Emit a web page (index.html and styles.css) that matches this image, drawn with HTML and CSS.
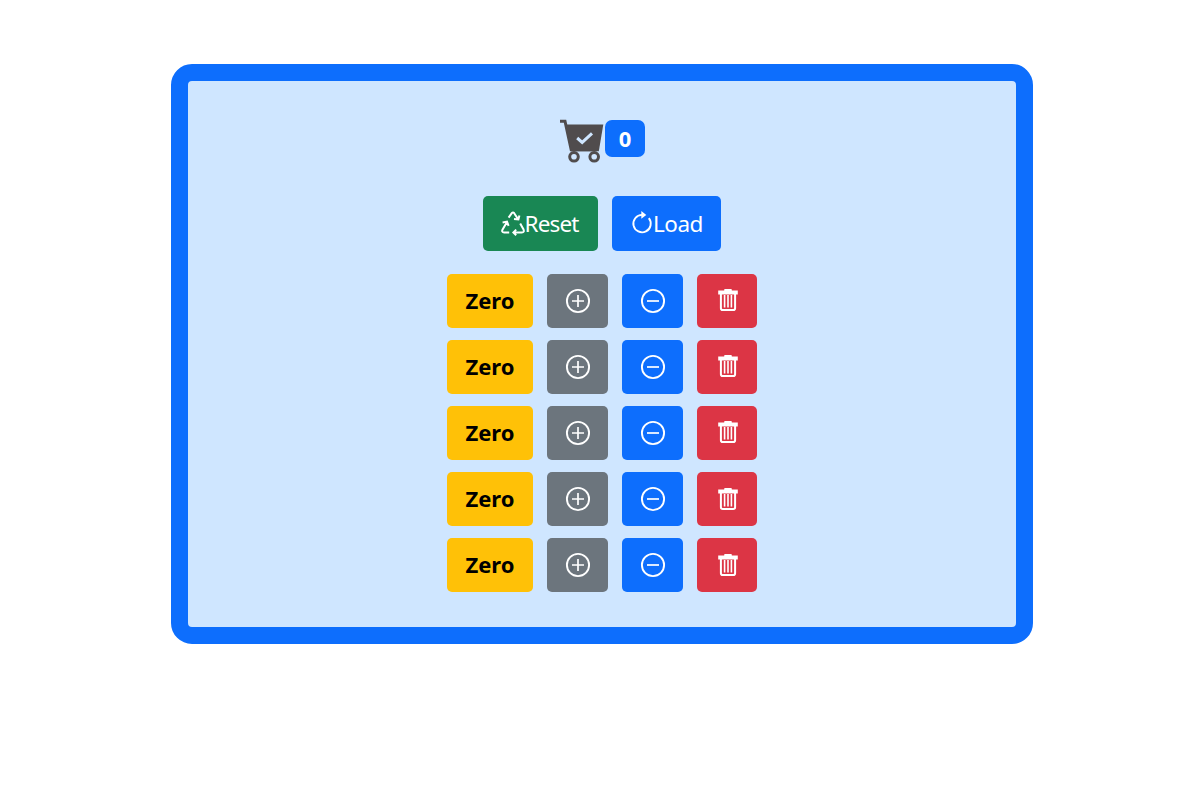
FILE: index.html
```
<!DOCTYPE html>
<html lang="en">
<head>
<meta charset="utf-8">
<title>Counter</title>
<link rel="stylesheet" href="styles.css">
</head>
<body>
<svg class="defs" aria-hidden="true">
  <symbol id="plus" viewBox="0 0 26 26"><circle cx="13" cy="13" r="11.1"/><path class="thin" d="M7 13H19M13 7V19"/></symbol>
  <symbol id="minus" viewBox="0 0 26 26"><circle cx="13" cy="13" r="11.1"/><path class="thin" d="M7 13H19"/></symbol>
  <symbol id="trash" viewBox="0 0 22 24"><path class="solid" d="M1.2 2.6h6V1.7q0-.7 .7-.7h6.2q.7 0 .7.7v.9h6v4H1.2z"/><path d="M3.9 5V20.2q0 1.8 1.8 1.8H16.3q1.8 0 1.8-1.8V5"/><path class="bars" d="M7.6 7V19.5M11 7V19.5M14.4 7V19.5"/></symbol>
</svg>
<main class="panel">
  <div class="cart">
    <svg class="cart-icon" viewBox="0 0 46 46"><path class="frame" d="M1 3.3H6L12.2 31.8H37.5"/><path class="basket" d="M6.8 6.6H44.3L39.8 33.2H12z"/><circle cx="15" cy="38.8" r="4.3"/><circle cx="35.2" cy="38.8" r="4.3"/><path class="check" d="M18.2 20L23.2 24.4L33 15.4"/></svg>
    <span class="badge">0</span>
  </div>
  <div class="actions">
    <button class="btn green"><svg class="recycle" viewBox="0 0 24 24"><path d="M7.6 6.6L10.8 2.2Q12 .6 13.2 2.2L16.8 7.8M13 7.9L17.4 8.4L18.4 4.4M1.6 11.4L6 10.6L7.6 14.8M5.7 11.4L1.6 18.4Q.2 21.4 3.2 21.4H8.2M19.2 12.5L22.4 18.2Q23.8 21.4 20.8 21.4H12.8M15.2 18.6L12.4 21.4L15.2 24.2"/></svg><span class="label reset">Reset</span></button>
    <button class="btn blue"><svg class="reload" viewBox="0 0 22 24"><path d="M13 3.9H11A8.7 8.7 0 1 0 17.8 7.1"/><path class="solid" d="M10.3 .1L15.3 3.9L10.3 7.7z"/></svg><span class="label load">Load</span></button>
  </div>
  <div class="rows">
    <div class="row"><span class="count">Zero</span><button class="btn gray"><svg><use href="#plus"/></svg></button><button class="btn blue"><svg><use href="#minus"/></svg></button><button class="btn red"><svg class="bin"><use href="#trash"/></svg></button></div>
    <div class="row"><span class="count">Zero</span><button class="btn gray"><svg><use href="#plus"/></svg></button><button class="btn blue"><svg><use href="#minus"/></svg></button><button class="btn red"><svg class="bin"><use href="#trash"/></svg></button></div>
    <div class="row"><span class="count">Zero</span><button class="btn gray"><svg><use href="#plus"/></svg></button><button class="btn blue"><svg><use href="#minus"/></svg></button><button class="btn red"><svg class="bin"><use href="#trash"/></svg></button></div>
    <div class="row"><span class="count">Zero</span><button class="btn gray"><svg><use href="#plus"/></svg></button><button class="btn blue"><svg><use href="#minus"/></svg></button><button class="btn red"><svg class="bin"><use href="#trash"/></svg></button></div>
    <div class="row"><span class="count">Zero</span><button class="btn gray"><svg><use href="#plus"/></svg></button><button class="btn blue"><svg><use href="#minus"/></svg></button><button class="btn red"><svg class="bin"><use href="#trash"/></svg></button></div>
  </div>
</main>
</body>
</html>
```
FILE: styles.css
```
* { box-sizing: border-box; }
body { margin: 0; background: #fff; font-family: "Noto Sans", "Open Sans", sans-serif; }
.defs { position: absolute; width: 0; height: 0; }
.panel {
  width: 862px;
  height: 580px;
  margin: 64px 0 0 171px;
  padding-top: 37px;
  border: 17px solid #0d6efd;
  border-radius: 21px;
  background: #cfe6ff;
}
svg { display: block; flex: none; overflow: visible; fill: none; stroke: currentColor; stroke-width: 1.9; }
.cart { display: flex; height: 78px; margin-left: 371px; }
.cart-icon { width: 46px; height: 46px; color: #504c4d; stroke-width: 3; }
.cart-icon .basket { fill: currentColor; stroke: none; }
.cart-icon .check { stroke: #cfe6ff; stroke-width: 3; }
.badge {
  width: 40px;
  height: 37px;
  margin: 2px 0 0 0;
  border-radius: 7px;
  background: #0d6efd;
  color: #fff;
  font-size: 22px;
  font-weight: 700;
  line-height: 36px;
  text-align: center;
}
.actions { display: flex; gap: 14px; margin-left: 295px; height: 77.5px; }
.btn {
  display: flex;
  align-items: center;
  justify-content: center;
  width: 60.5px;
  height: 54.5px;
  padding: 0;
  border: 0;
  border-radius: 5px;
  color: #fff;
  font-family: inherit;
}
.green { background: #198754; }
.blue { background: #0d6efd; }
.gray { background: #6c757d; }
.red { background: #dc3545; }
.actions .btn { justify-content: flex-start; }
.actions .green { width: 115px; padding-left: 18px; }
.actions .blue { width: 109px; padding-left: 19px; }
.recycle { width: 24px; height: 24px; stroke-width: 2; }
.reload { width: 22px; height: 24px; }
.label { font-size: 22.5px; line-height: 34px; padding-top: 1px; white-space: nowrap; }
.reset { letter-spacing: -.85px; margin-left: -.5px; }
.load { letter-spacing: -.5px; }
.rows { display: grid; gap: 11.6px; margin-left: 259px; }
.row { display: flex; gap: 14.3px; }
.row svg { width: 26px; height: 26px; margin-left: 1px; }
.row .bin { width: 22px; height: 24px; margin: -1px 0 0 1px; stroke-width: 2; }
.thin { stroke-width: 1.7; }
.bars { stroke-width: 1.6; }
.solid { fill: currentColor; stroke: none; }
.count {
  width: 86px;
  height: 54.5px;
  border-radius: 5px;
  background: #ffc107;
  color: #000;
  font-size: 22px;
  font-weight: 700;
  line-height: 53px;
  text-align: center;
}
```
